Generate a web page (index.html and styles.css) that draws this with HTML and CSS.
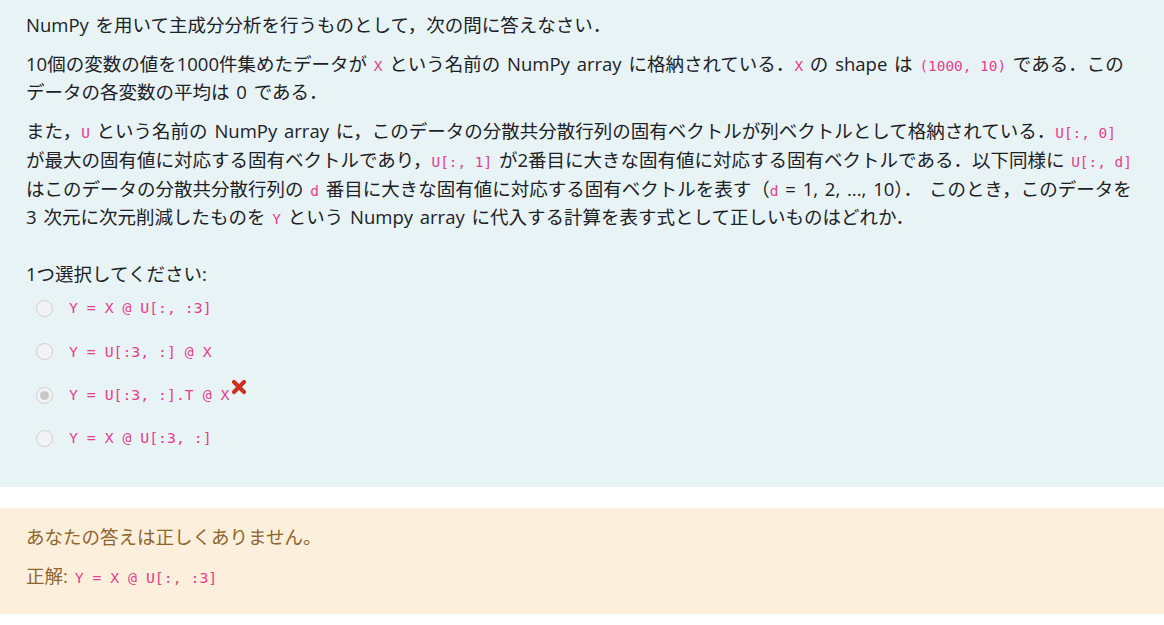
FILE: index.html
```html
<!DOCTYPE html>
<html lang="ja">
<head>
<meta charset="utf-8">
<link rel="stylesheet" href="styles.css">
</head>
<body>
<div class="que">
  <div class="formulation">
    <div class="qtext">
      <p>NumPy を用いて主成分分析を行うものとして，次の問に答えなさい．</p>
      <p>10個の変数の値を1000件集めたデータが <code>X</code> という名前の NumPy array に格納されている．<code>X</code> の shape は <code>(1000, 10)</code> である．このデータの各変数の平均は 0 である．</p>
      <p>また，<code>U</code> という名前の NumPy array に，このデータの分散共分散行列の固有ベクトルが列ベクトルとして格納されている．<code>U[:, 0]</code> が最大の固有値に対応する固有ベクトルであり，<code>U[:, 1]</code> が2番目に大きな固有値に対応する固有ベクトルである．以下同様に <code>U[:, d]</code> はこのデータの分散共分散行列の <code>d</code> 番目に大きな固有値に対応する固有ベクトルを表す（<code>d</code> = 1, 2, ..., 10）． このとき，このデータを 3 次元に次元削減したものを <code>Y</code> という Numpy array に代入する計算を表す式として正しいものはどれか．</p>
    </div>
    <div class="prompt">1つ選択してください:</div>
    <div class="answer">
      <div class="opt"><span class="radio"></span><code>Y = X @ U[:, :3]</code></div>
      <div class="opt"><span class="radio"></span><code>Y = U[:3, :] @ X</code></div>
      <div class="opt"><span class="radio checked"></span><code>Y = U[:3, :].T @ X</code><svg class="wrong" width="16" height="16" viewBox="0 0 16 16"><path d="M3 3 L13 13 M13 3 L3 13" stroke="#ca3120" stroke-width="4.2" stroke-linecap="round"/></svg></div>
      <div class="opt"><span class="radio"></span><code>Y = X @ U[:3, :]</code></div>
    </div>
  </div>
  <div class="outcome">
    <div class="specific">あなたの答えは正しくありません。</div>
    <div class="rightanswer">正解: <code>Y = X @ U[:, :3]</code></div>
  </div>
</div>
</body>
</html>
```

FILE: styles.css
```css
html, body {
  margin: 0;
  padding: 0;
  background: #ffffff;
}
body {
  font-family: "Open Sans", "Noto Sans CJK JP", sans-serif;
  font-size: 18.5px;
  line-height: 28.7px;
  word-spacing: 2px;
  color: #1d2125;
}
code {
  font-family: "DejaVu Sans Mono", "Liberation Mono", monospace;
  font-size: 14.4px;
  line-height: 1;
  word-spacing: 0;
  color: #e83e8c;
}
.formulation {
  background: #e7f3f5;
  padding: 11px 26px 28px;
}
.qtext p {
  margin: 0 0 10px;
}
.prompt {
  margin-top: 28px;
}
.answer {
  display: flex;
  flex-direction: column;
  gap: 3.3px;
}
.opt {
  display: flex;
  align-items: center;
  height: 40px;
  padding-left: 10px;
}
.opt code {
  font-size: 14.8px;
  margin-left: 16px;
}
.radio {
  width: 15px;
  height: 15px;
  border: 1px solid #cfcfcf;
  border-radius: 50%;
  background: #f1f3f4;
  display: flex;
  align-items: center;
  justify-content: center;
  flex: none;
}
.radio.checked::after {
  content: "";
  width: 9px;
  height: 9px;
  border-radius: 50%;
  background: #c8c8c8;
}
.wrong {
  align-self: flex-start;
  margin-top: 4px;
  margin-left: 2px;
}
.outcome {
  margin-top: 21px;
  background: #fcefdc;
  color: #8e662e;
  padding: 15px 26px 23px;
}
.specific {
  margin-bottom: 11px;
}
.rightanswer code {
  font-size: 14.8px;
}
```
